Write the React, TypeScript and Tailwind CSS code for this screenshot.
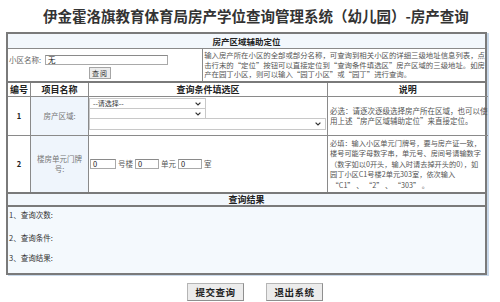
import React from 'react';

const cjk = "font-['Noto_Sans_CJK_SC','Noto_Sans',sans-serif]";

function Chevron() {
  return (
    <svg width="6" height="4" viewBox="0 0 6 4" className="shrink-0">
      <path d="M0.6 0.6 L3 3 L5.4 0.6" fill="none" stroke="#333" strokeWidth="1.2" />
    </svg>
  );
}

function FakeSelect({ label, className }: { label?: string; className: string }) {
  return (
    <div className={`flex items-center justify-between pl-[3px] pr-[4px] bg-white border border-[#c8c8c8] text-[7px] text-[#333] ${className}`}>
      <span>{label}</span>
      <Chevron />
    </div>
  );
}

function SmallInput({ value, className }: { value: string; className: string }) {
  return (
    <div className={`flex items-center pl-[2px] bg-white border border-[#a9a9a9] border-t-[#8a8a8a] text-[7.5px] text-[#222] ${className}`}>
      {value}
    </div>
  );
}

function Button({ children }: { children: React.ReactNode }) {
  return (
    <div className="w-[57px] h-[18px] flex items-center justify-center bg-[#ececec] border border-[#b5b5b5] border-b-[#8f8f8f] border-r-[#8f8f8f] text-[9.5px] font-bold text-[#222] tracking-[0.5px]">
      {children}
    </div>
  );
}

export default function App() {
  return (
    <div className={`w-[500px] h-[302px] bg-white overflow-hidden ${cjk}`}>
      <div className="h-[32px] flex items-center pl-[43px] text-[14.5px] font-semibold text-[#333] leading-none">
        伊金霍洛旗教育体育局房产学位查询管理系统（幼儿园）-房产查询
      </div>

      <div className="ml-[6px] w-[481px] border-2 border-[#7a7a7a] shadow-[2px_1px_0_#c9d9ea]">
        {/* 房产区域辅助定位 */}
        <div className="h-[15px] flex items-center justify-center bg-[#f2f7fc] border-b border-[#8a8a8a] text-[8.5px] font-bold text-[#222]">
          房产区域辅助定位
        </div>
        <div className="h-[34px] flex border-b-2 border-[#7a7a7a]">
          <div className="w-[198px] border-r border-[#8a8a8a] flex flex-col pt-[5px]">
            <div className="flex items-center pl-[1px]">
              <span className="text-[7.5px] text-[#666] w-[36px]">小区名称:</span>
              <SmallInput value="无" className="w-[123px] h-[10px]" />
            </div>
            <div className="mt-[2px] ml-[81px] w-[22px] h-[12px] flex items-center justify-center bg-[#ececec] border border-[#a5a5a5] text-[7px] text-[#333] tracking-[1px]">
              查阅
            </div>
          </div>
          <div className="flex-1 pl-[1px] pt-[1px] text-[7.4px] leading-[9.6px] text-[#555] whitespace-nowrap">
            <div>输入房产所在小区的全部或部分名称，可查询到相关小区的详细三级地址信息列表，点</div>
            <div>击行末的“定位”按钮可以直接定位到“查询条件填选区”房产区域的三级地址。如房</div>
            <div>产在园丁小区，则可以输入“园丁小区”或“园丁”进行查询。</div>
          </div>
        </div>

        {/* 查询条件 */}
        <div className="grid grid-cols-[23px_58px_239px_1fr] text-[#222]">
          <div className="h-[14px] flex items-center justify-center border-r border-b border-[#8a8a8a] text-[9px] font-bold">编号</div>
          <div className="h-[14px] flex items-center justify-center border-r border-b border-[#8a8a8a] text-[9px] font-bold">项目名称</div>
          <div className="h-[14px] flex items-center justify-center border-r border-b border-[#8a8a8a] text-[9px] font-bold">查询条件填选区</div>
          <div className="h-[14px] flex items-center justify-center border-b border-[#8a8a8a] text-[9px] font-bold">说明</div>

          <div className="h-[39px] flex items-center justify-center border-r border-b border-[#8a8a8a] text-[7.5px] font-bold">1</div>
          <div className="h-[39px] flex items-center justify-center border-r border-b border-[#8a8a8a] bg-[#eff5fc] text-[7.5px] text-[#777]">房产区域:</div>
          <div className="h-[39px] flex flex-col border-r border-b border-[#8a8a8a] pt-[1px]">
            <FakeSelect label="--请选择--" className="w-[117px] h-[11px]" />
            <FakeSelect className="w-[117px] h-[11px] -mt-px" />
            <FakeSelect className="w-[237px] h-[12px] -mt-px" />
          </div>
          <div className="h-[39px] flex flex-col justify-center border-b border-[#8a8a8a] pl-[2px] text-[7.5px] leading-[10px] text-[#555] whitespace-nowrap">
            <div>必选：请逐次逐级选择房产所在区域，也可以使</div>
            <div>用上述“房产区域辅助定位”来直接定位。</div>
          </div>

          <div className="h-[56px] flex items-center justify-center border-r border-[#8a8a8a] text-[7.5px] font-bold">2</div>
          <div className="h-[56px] flex flex-col items-center justify-center border-r border-[#8a8a8a] bg-[#eff5fc] text-[7.5px] leading-[10px] text-[#777]">
            <div>楼房单元门牌</div>
            <div>号:</div>
          </div>
          <div className="h-[56px] flex items-center border-r border-[#8a8a8a] pl-[1px] text-[7.5px] text-[#555]">
            <SmallInput value="0" className="w-[26px] h-[10px]" />
            <span className="mx-[2px]">号楼</span>
            <SmallInput value="0" className="w-[24px] h-[10px]" />
            <span className="mx-[2px]">单元</span>
            <SmallInput value="0" className="w-[24px] h-[10px]" />
            <span className="ml-[2px]">室</span>
          </div>
          <div className="h-[56px] flex flex-col justify-center pl-[2px] text-[7.2px] leading-[10.4px] text-[#555] whitespace-nowrap">
            <div>必填：输入小区单元门牌号，要与房产证一致，</div>
            <div>楼号可能字母数字串，单元号、房间号请输数字</div>
            <div>（数字如以0开头，输入时请去掉开头的0），如</div>
            <div>园丁小区C1号楼2单元303室，依次输入</div>
            <div>&nbsp;“C1” 、 “2” 、 “303” 。</div>
          </div>
        </div>

        {/* 查询结果 */}
        <div className="h-[15px] flex items-center justify-center bg-[#f2f7fc] border-t-2 border-b-2 border-[#7a7a7a] text-[9px] font-bold text-[#222]">
          查询结果
        </div>
        <div className="h-[66px] bg-[#f4f9fd] flex flex-col pl-[1px] pt-[2px] text-[7.5px] text-[#333]">
          <div className="h-[11px] flex items-center">1、查询次数:</div>
          <div className="h-[11px] mt-[12px] flex items-center">2、查询条件:</div>
          <div className="h-[11px] mt-[9px] flex items-center">3、查询结果:</div>
        </div>
      </div>

      <div className="flex gap-[22px] pl-[187px] pt-[8px]">
        <Button>提交查询</Button>
        <Button>退出系统</Button>
      </div>
    </div>
  );
}
